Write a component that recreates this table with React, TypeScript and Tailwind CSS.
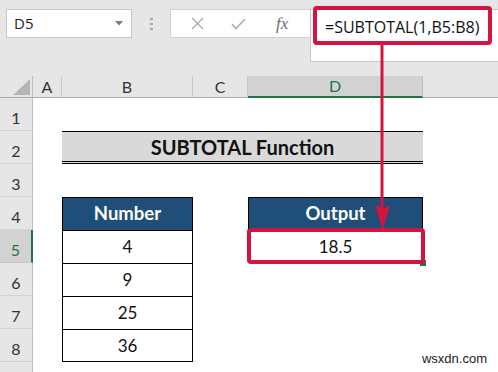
import React from "react";

const cellFont = { fontFamily: "Lato, 'Open Sans', sans-serif" };
const uiFont = { fontFamily: "'Open Sans', 'Noto Sans', sans-serif" };

function RowHead({ n, active }: { n?: number; active?: boolean }) {
  return (
    <div
      className={
        active
          ? "flex items-end justify-center pb-[4px] text-[16px] leading-none bg-[#d2d2d2] text-[#217346] border-b border-b-[#c8c8c8] border-r-2 border-r-[#217346]"
          : "flex items-end justify-center pb-[4px] text-[16px] leading-none bg-[#e6e6e6] text-[#333333] border-b border-b-[#d4d4d4] border-r border-r-[#bdbdbd]"
      }
      style={cellFont}
    >
      {n}
    </div>
  );
}

function ColHead({ label, active }: { label: string; active?: boolean }) {
  return (
    <div
      className={
        active
          ? "flex items-center justify-center text-[16px] bg-[#d2d2d2] text-[#217346] border-b-2 border-b-[#217346] border-r border-r-[#bdbdbd]"
          : "flex items-center justify-center text-[16px] bg-[#e6e6e6] text-[#333333] border-b border-b-[#ababab] border-r border-r-[#c6c6c6]"
      }
      style={cellFont}
    >
      {label}
    </div>
  );
}

function NumCell({ value, last }: { value: string; last?: boolean }) {
  return (
    <div
      className={
        last
          ? "flex items-center justify-center text-[17px] text-[#111] bg-white border border-black"
          : "flex items-center justify-center text-[17px] text-[#111] bg-white border-x border-t border-black"
      }
      style={cellFont}
    >
      {value}
    </div>
  );
}

function BlueHead({ label }: { label: string }) {
  return (
    <div
      className="flex items-center justify-center text-[18.5px] font-bold text-white bg-[#1f4e79] border-x border-t border-black"
      style={cellFont}
    >
      {label}
    </div>
  );
}

const Empty = () => <div className="bg-white" />;

export default function App() {
  return (
    <div className="relative w-[498px] h-[372px] overflow-hidden bg-white select-none">
      {/* formula bar */}
      <div className="flex h-[76px] bg-[#e6e6e6] pl-[6px] pt-[9px]">
        <div
          className="flex h-[29px] w-[126px] items-center justify-between border border-[#c6c6c6] bg-white pl-[7px] pr-[8px] text-[15px] text-[#222]"
          style={uiFont}
        >
          <span>D5</span>
          <svg width="8" height="5" viewBox="0 0 8 5">
            <polygon points="0,0 8,0 4,4.5" fill="#7a7a7a" />
          </svg>
        </div>
        <div className="ml-[18px] mt-[9px] flex h-[12px] w-[3px] flex-col justify-between">
          <div className="h-[2px] w-[3px] bg-[#a4a4a4]" />
          <div className="h-[2px] w-[3px] bg-[#a4a4a4]" />
          <div className="h-[2px] w-[3px] bg-[#a4a4a4]" />
        </div>
        <div className="ml-[17px] flex h-[29px] w-[140px] items-center border-y border-l border-[#d0d0d0] bg-white">
          <svg className="ml-[20px]" width="13" height="13" viewBox="0 0 13 13">
            <path d="M1 1 L12 12 M12 1 L1 12" stroke="#a9a9a9" strokeWidth="1.3" fill="none" />
          </svg>
          <svg className="ml-[27px]" width="15" height="12" viewBox="0 0 15 12">
            <path d="M1 6.5 L5 10.5 L14 1" stroke="#b3b3b3" strokeWidth="1.8" fill="none" />
          </svg>
          <span
            className="ml-[30px] text-[17px] italic text-[#6e6e6e]"
            style={{ fontFamily: "'Liberation Serif', 'DejaVu Serif', serif" }}
          >
            fx
          </span>
        </div>
        <div
          className="h-[53px] flex-1 border-y border-l border-[#c6c6c6] bg-white pl-[14px] pt-[5px] text-[16px] text-[#111]"
          style={uiFont}
        >
          =SUBTOTAL(1,B5:B8)
        </div>
      </div>

      {/* sheet grid */}
      <div className="grid grid-cols-[33px_29px_131px_55px_175px_1fr] grid-rows-[22px_repeat(9,33px)]">
        {/* column headers */}
        <div className="relative bg-[#e6e6e6] border-b border-b-[#ababab] border-r border-r-[#bdbdbd]">
          <svg className="absolute right-[2px] bottom-[2px]" width="17" height="16" viewBox="0 0 17 16">
            <polygon points="17,0 17,16 0,16" fill="#b5b5b5" />
          </svg>
        </div>
        <ColHead label="A" />
        <ColHead label="B" />
        <ColHead label="C" />
        <ColHead label="D" active />
        <div className="bg-[#e6e6e6] border-b border-b-[#ababab]" />

        {/* row 1 */}
        <RowHead n={1} />
        <div className="col-span-5 bg-white" />

        {/* row 2 */}
        <RowHead n={2} />
        <Empty />
        <div
          className="col-span-3 flex items-center justify-center bg-[#d9d9d9] border-t border-t-black border-b-[3px] border-double border-b-black text-[20px] font-bold text-[#111]"
          style={cellFont}
        >
          SUBTOTAL Function
        </div>
        <Empty />

        {/* row 3 */}
        <RowHead n={3} />
        <div className="col-span-5 bg-white" />

        {/* row 4 */}
        <RowHead n={4} />
        <Empty />
        <BlueHead label="Number" />
        <Empty />
        <BlueHead label="Output" />
        <Empty />

        {/* row 5 */}
        <RowHead n={5} active />
        <Empty />
        <NumCell value="4" />
        <Empty />
        <div
          className="flex items-center justify-center bg-white text-[17px] text-[#111]"
          style={cellFont}
        >
          18.5
        </div>
        <Empty />

        {/* rows 6-8 */}
        <RowHead n={6} />
        <Empty />
        <NumCell value="9" />
        <div className="col-span-3 bg-white" />

        <RowHead n={7} />
        <Empty />
        <NumCell value="25" />
        <div className="col-span-3 bg-white" />

        <RowHead n={8} />
        <Empty />
        <NumCell value="36" last />
        <div className="col-span-3 bg-white" />

        {/* row 9, only its top edge is in view */}
        <RowHead />
        <div className="col-span-5 bg-white" />
      </div>

      {/* fill handle of the active cell */}
      <div className="absolute left-[420px] top-[260px] h-[6px] w-[6px] bg-[#217346]" />

      {/* callouts */}
      <div className="absolute left-[313px] top-[6px] h-[39px] w-[179px] rounded-[4px] border-4 border-[#d4143f]" />
      <div className="absolute left-[247px] top-[228px] h-[36px] w-[178px] rounded-[4px] border-4 border-[#d4143f]" />
      <svg className="pointer-events-none absolute left-0 top-0" width="498" height="372" viewBox="0 0 498 372">
        <line x1="382" y1="45" x2="382" y2="212" stroke="#d4143f" strokeWidth="3" />
        <polygon points="375,205 382.5,209 390,205 382.5,230" fill="#d4143f" />
      </svg>

      <div
        className="absolute right-[11px] bottom-[4px] text-[13px] text-[#1a1a1a]"
        style={{ fontFamily: "'Liberation Sans', Arial, sans-serif" }}
      >
        wsxdn.com
      </div>
    </div>
  );
}
